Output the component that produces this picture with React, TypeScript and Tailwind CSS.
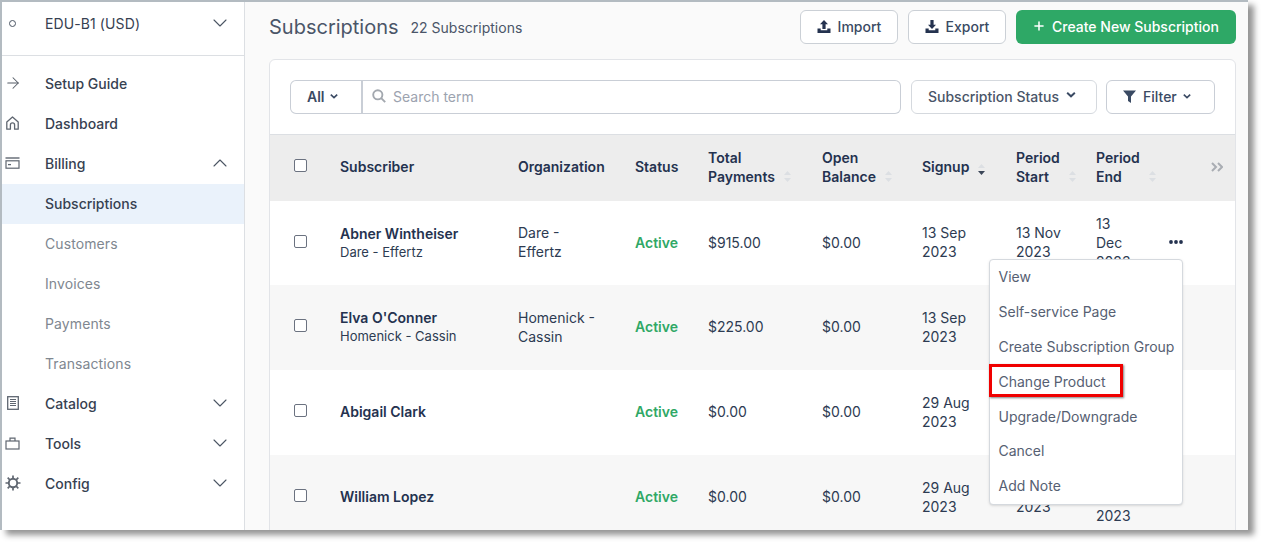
import { ChevronDown, ChevronUp, ArrowRight, Plus } from "lucide-react";
import type { ReactNode } from "react";

const font = { fontFamily: "Inter, 'Noto Sans', sans-serif" };

function HomeIcon() {
  return (
    <svg width="13" height="14" viewBox="0 0 13 14" fill="none" stroke="#5f6670" strokeWidth="1.3">
      <path d="M.8 6 6.5 1 12.2 6v7.2H8.6V9a2.1 2.1 0 0 0-4.2 0v4.2H.8z" strokeLinejoin="round" />
    </svg>
  );
}

function BillingIcon() {
  return (
    <svg width="15" height="12" viewBox="0 0 15 12" fill="none" stroke="#5f6670" strokeWidth="1.2">
      <path d="M.5 1h14" strokeWidth="1.4" />
      <rect x="1" y="3.8" width="13" height="7.4" />
      <path d="M3 7.6h3" strokeWidth="1.3" />
    </svg>
  );
}

function CatalogIcon() {
  return (
    <svg width="12" height="14" viewBox="0 0 12 14" fill="none" stroke="#5f6670" strokeWidth="1.3">
      <rect x="0.7" y="0.7" width="10.6" height="12.6" />
      <path d="M3 3.5h6M3 5.5h6M3 7.5h6M3 9.5h6" strokeWidth="1.1" />
    </svg>
  );
}

function ToolsIcon() {
  return (
    <svg width="15" height="13" viewBox="0 0 15 13" fill="none" stroke="#5f6670" strokeWidth="1.2">
      <rect x="1" y="4" width="13" height="8" />
      <path d="M5 4V1.2h5V4" />
    </svg>
  );
}

function GearIcon() {
  return (
    <svg width="16" height="16" viewBox="0 0 16 16" fill="none" stroke="#5f6670">
      <circle cx="8" cy="8" r="4.2" strokeWidth="1.9" />
      <path d="M8 .5v3M8 12.5v3M.5 8h3M12.5 8h3M2.7 2.7l2.1 2.1M11.2 11.2l2.1 2.1M13.3 2.7l-2.1 2.1M4.8 11.2l-2.1 2.1" strokeWidth="1.7" />
    </svg>
  );
}

function TrayArrow({ up }: { up?: boolean }) {
  return (
    <svg width="14" height="13" viewBox="0 0 14 13" fill="#24324f">
      {up ? <path d="M7 0 11 4.2H8.6V9H5.4V4.2H3z" /> : <path d="M5.4 0h3.2v4.8H11L7 9 3 4.8h2.4z" />}
      <path d="M.5 8.6h3.2v1.6h6.6V8.6h3.2V13H.5z" />
    </svg>
  );
}

function Caret({ wide }: { wide?: boolean }) {
  return (
    <svg width={wide ? 10 : 8} height={wide ? 6 : 5} viewBox="0 0 8 5" className="shrink-0">
      <path d="M.8.6 4 3.6 7.2.6" fill="none" stroke="currentColor" strokeWidth="1.6" />
    </svg>
  );
}

function Sort({ active }: { active?: boolean }) {
  return (
    <svg width="9" height="13" viewBox="0 0 9 13" className="shrink-0">
      <path d="M4.5 1 8 5H1z" fill="#dcdfe3" />
      <path d="M4.5 12 8 8H1z" fill={active ? "#3b4658" : "#dcdfe3"} />
    </svg>
  );
}

function NavItem({ icon, label, chevron, active, sub }: { icon?: ReactNode; label: string; chevron?: "up" | "down"; active?: boolean; sub?: boolean }) {
  return (
    <div className={"flex h-10 items-center pb-[2px] pr-[12px] " + (active ? "bg-[#eaf2fb]" : "")}>
      <div className="flex w-[43px] shrink-0 justify-center pr-[22px]">{icon}</div>
      <span className={"text-[14px] " + (sub ? "font-normal tracking-[0.1px] text-[#808790]" : "font-medium text-[#374151]")}>{label}</span>
      {chevron === "down" && <ChevronDown size={24} strokeWidth={1.1} color="#4b5563" className="ml-auto" />}
      {chevron === "up" && <ChevronUp size={24} strokeWidth={1.1} color="#4b5563" className="ml-auto" />}
    </div>
  );
}

function Sidebar() {
  return (
    <aside className="w-[243px] shrink-0 border-r border-[#dcdfe3] bg-white">
      <div className="flex h-[54px] items-start border-b border-[#dcdfe3] pr-[12px] pt-[11px]">
        <div className="flex h-[20px] w-[43px] shrink-0 items-center justify-center pr-[22px]">
          <span className="h-[7px] w-[7px] rounded-full border border-[#4b5563]" />
        </div>
        <span className="text-[14px] tracking-[0.1px] text-[#374151]">EDU-B1 (USD)</span>
        <ChevronDown size={24} strokeWidth={1.1} color="#4b5563" className="ml-auto -mt-[2px]" />
      </div>
      <div className="pt-[8px]">
        <NavItem icon={<ArrowRight size={18} strokeWidth={1.4} color="#555c66" />} label="Setup Guide" />
        <NavItem icon={<HomeIcon />} label="Dashboard" />
        <NavItem icon={<BillingIcon />} label="Billing" chevron="up" />
        <NavItem label="Subscriptions" active />
        <NavItem label="Customers" sub />
        <NavItem label="Invoices" sub />
        <NavItem label="Payments" sub />
        <NavItem label="Transactions" sub />
        <NavItem icon={<CatalogIcon />} label="Catalog" chevron="down" />
        <NavItem icon={<ToolsIcon />} label="Tools" chevron="down" />
        <NavItem icon={<GearIcon />} label="Config" chevron="down" />
      </div>
    </aside>
  );
}

function Head({ children, sort, active, single }: { children: ReactNode; sort?: boolean; active?: boolean; single?: boolean }) {
  return (
    <th className={"p-0 text-left align-middle text-[14px] font-semibold leading-[19px] text-[#24324f] " + (single ? "pb-[4px]" : "pb-[2px]")}>
      <div className="flex items-end gap-[8px]">
        <span>{children}</span>
        {sort && <span className={active ? "" : "pb-[3px]"}><Sort active={active} /></span>}
      </div>
    </th>
  );
}

type Row = { name: string; org?: string; orgCol?: string; paid: string; signup: string; start: string; end: string };

const rows: Row[] = [
  { name: "Abner Wintheiser", org: "Dare - Effertz", orgCol: "Dare - Effertz", paid: "$915.00", signup: "13 Sep 2023", start: "13 Nov 2023", end: "13 Dec 2023" },
  { name: "Elva O'Conner", org: "Homenick - Cassin", orgCol: "Homenick - Cassin", paid: "$225.00", signup: "13 Sep 2023", start: "13 Nov 2023", end: "13 Dec 2023" },
  { name: "Abigail Clark", paid: "$0.00", signup: "29 Aug 2023", start: "29 Aug 2023", end: "29 Sep 2023" },
  { name: "William Lopez", paid: "$0.00", signup: "29 Aug 2023", start: "29 Aug 2023", end: "29 Sep 2023" },
];

const menu = ["View", "Self-service Page", "Create Subscription Group", "Change Product", "Upgrade/Downgrade", "Cancel", "Add Note"];

function Check({ offset }: { offset: string }) {
  return <span className={"mx-auto block h-[13px] w-[13px] rounded-[2px] border border-[#6b7280] bg-white " + offset} />;
}

function Table() {
  return (
    <table className="w-[965px] table-fixed border-collapse">
      <colgroup>
        <col className="w-[70px]" />
        <col className="w-[178px]" />
        <col className="w-[117px]" />
        <col className="w-[73px]" />
        <col className="w-[114px]" />
        <col className="w-[100px]" />
        <col className="w-[94px]" />
        <col className="w-[80px]" />
        <col className="w-[56px]" />
        <col />
      </colgroup>
      <thead>
        <tr className="h-[66px] bg-[#ededed]">
          <th className="p-0 pr-[9px]"><Check offset="-mt-[5px]" /></th>
          <Head single>Subscriber</Head>
          <Head single>Organization</Head>
          <Head single>Status</Head>
          <Head sort>Total<br />Payments</Head>
          <Head sort>Open<br />Balance</Head>
          <Head sort active single>Signup</Head>
          <Head sort>Period<br />Start</Head>
          <Head sort>Period<br />End</Head>
          <th className="p-0 pb-[2px] pl-[59px] text-left">
            <svg width="12" height="10" viewBox="0 0 12 10" fill="none" stroke="#a9adb3" strokeWidth="2">
              <path d="M1 1l4 4-4 4M7 1l4 4-4 4" />
            </svg>
          </th>
        </tr>
      </thead>
      <tbody className="text-[14px] leading-[19px] text-[#2d3b52]">
        {rows.map((r, i) => (
          <tr key={r.name} className={(i === 0 ? "h-[84px] " : "h-[85px] ") + (i % 2 ? "bg-[#f7f7f7]" : "bg-white")}>
            <td className="p-0 pr-[9px]"><Check offset={i === 0 ? "-mt-[3px]" : "-mt-[5px]"} /></td>
            <td className="p-0 pb-[2px]">
              <div className="font-semibold text-[#24324f]">{r.name}</div>
              {r.org && <div className="text-[13px] leading-[18px]">{r.org}</div>}
            </td>
            <td className="p-0 pb-[2px] pr-[30px]">{r.orgCol}</td>
            <td className="p-0 pb-[2px] font-semibold text-[#2fa866]">Active</td>
            <td className="p-0 pb-[2px]">{r.paid}</td>
            <td className="p-0 pb-[2px]">$0.00</td>
            <td className="p-0 pb-[2px] pr-[30px]">{r.signup}</td>
            <td className="p-0 pb-[2px] pr-[18px]">{r.start}</td>
            <td className="p-0 pb-[2px] pr-[14px]">{r.end}</td>
            <td className="p-0 pb-[2px] pl-[17px]">
              {i === 0 && (
                <svg width="14" height="4" viewBox="0 0 14 4" fill="#24324f" className="block">
                  <circle cx="2" cy="2" r="1.9" />
                  <circle cx="7" cy="2" r="1.9" />
                  <circle cx="12" cy="2" r="1.9" />
                </svg>
              )}
            </td>
          </tr>
        ))}
      </tbody>
    </table>
  );
}

export default function App() {
  return (
    <div className="h-[546px] w-[1264px] overflow-hidden bg-white" style={font}>
      <div className="flex h-[530px] w-[1248px] overflow-hidden border-l-2 border-t-2 border-[#b3bbc1] bg-[#fafafa] shadow-[6px_5px_6px_rgba(0,0,0,0.42)]">
        <Sidebar />
        <main className="relative min-w-0 flex-1 pl-[24px] pr-[12px] pt-[8px]">
          <div className="flex h-[34px] items-center">
            <h1 className="text-[20px] font-normal text-[#4a5568]">Subscriptions</h1>
            <span className="ml-[12px] text-[14px] text-[#4a5568]">22 Subscriptions</span>
            <button className="ml-auto flex h-[34px] w-[98px] items-center justify-center gap-[7px] rounded-[6px] border border-[#cbd0d6] bg-white pb-[2px] text-[14px] font-medium text-[#3a4a63]">
              <TrayArrow up /> Import
            </button>
            <button className="ml-[10px] flex h-[34px] w-[98px] items-center justify-center gap-[7px] rounded-[6px] border border-[#cbd0d6] bg-white pb-[2px] text-[14px] font-medium text-[#3a4a63]">
              <TrayArrow /> Export
            </button>
            <button className="ml-[10px] flex h-[34px] w-[220px] items-center gap-[6px] rounded-[6px] bg-[#2ea866] pb-[2px] pl-[16px] text-[14px] font-medium text-white">
              <Plus size={14} strokeWidth={2.6} /> Create New Subscription
            </button>
          </div>
          <section className="mt-[15px] h-[500px] overflow-hidden rounded-t-[6px] border border-[#e2e4e8] bg-white">
            <div className="flex h-[75px] items-start border-b border-[#dcdfe3] pl-[20px] pt-[20px]">
              <button className="flex h-[34px] w-[73px] items-center gap-[5px] rounded-l-[6px] border border-r-2 border-[#c9ced6] pb-[2px] pl-[16px] text-[14px] font-semibold text-[#3a4a63]">
                All <Caret />
              </button>
              <div className="flex h-[34px] w-[538px] items-center gap-[7px] rounded-r-[6px] border border-l-0 border-[#c9ced6] pb-[2px] pl-[9px] text-[14px] text-[#9ca3af]">
                <svg width="14" height="14" viewBox="0 0 14 14" fill="none" stroke="#a3a8af" strokeWidth="1.9">
                  <circle cx="5.8" cy="5.8" r="4.6" />
                  <path d="m9.2 9.2 4 4" />
                </svg>
                Search term
              </div>
              <button className="ml-[10px] flex h-[34px] w-[186px] items-center gap-[7px] rounded-[6px] border border-[#d5d9de] pb-[2px] pl-[16px] text-[14px] font-medium text-[#4a5568]">
                Subscription Status <span className="-mt-[3px] text-[#3a4a63]"><Caret wide /></span>
              </button>
              <button className="ml-[9px] flex h-[34px] w-[109px] items-center gap-[6px] rounded-[6px] border border-[#c9ced6] pb-[2px] pl-[16px] text-[14px] font-medium text-[#3a4a63]">
                <svg width="13" height="13" viewBox="0 0 13 13" fill="#3a4a63" className="mr-[1px]"><path d="M0 .5h13L8 6.5V13L5 11V6.5z" /></svg>
                Filter <Caret />
              </button>
            </div>
            <Table />
          </section>
          <div className="absolute left-[744px] top-[257px] z-10 w-[194px] rounded-[4px] border border-[#d5d9de] bg-white text-[14px] text-[#566072] shadow-sm">
            {menu.map((m) => (
              <div key={m} className="flex h-[34.8px] items-center whitespace-nowrap pb-[1px] pl-[8.5px]">{m}</div>
            ))}
            <div className="absolute -left-px top-[104px] h-[33px] w-[134px] border-[3px] border-[#f00000] shadow-[1px_1px_2px_rgba(0,0,0,0.5)]" />
          </div>
        </main>
      </div>
    </div>
  );
}
